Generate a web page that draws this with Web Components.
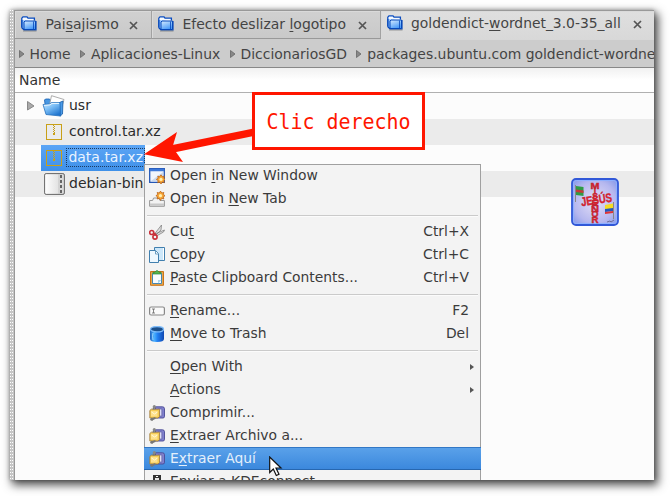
<!DOCTYPE html>
<html lang="es"><head><meta charset="utf-8"><title>File manager</title>
<style>html,body{margin:0;width:670px;height:496px;overflow:hidden;background:#fff;font-family:"DejaVu Sans",sans-serif}</style></head>
<body><fm-window></fm-window>
<script>
const define = (name, html, init) => customElements.define(name, class extends HTMLElement {
  connectedCallback() {
    if (this.shadowRoot) return;
    const t = document.createElement('template');
    t.innerHTML = html;
    this.attachShadow({mode: 'open'}).append(t.content.cloneNode(true));
    if (init) init(this, this.shadowRoot);
  }
});

const box = '<svg width="16" height="16" viewBox="0 0 16 16">';
const snap = '<svg width="16" height="16" viewBox="0 0 16 16" shape-rendering="crispEdges">';
const star = (x, y) => `<g transform="translate(${x} ${y})"><path d="M0-4.6L1.3-2.7 3.3-3.3 2.8-1.2 4.6 0 2.8 1.2 3.3 3.3 1.3 2.7 0 4.6-1.3 2.7-3.3 3.3-2.8 1.2-4.6 0-2.8-1.2-3.3-3.3-1.3-2.7z" fill="#f8a535" stroke="#b65a0c" stroke-width=".7"/><circle r="1.6" fill="#fff0b0"/></g>`;
const icons = {
  tabfolder: `${box}<defs><linearGradient id="g" x2=".5" y2="1"><stop stop-color="#d7ecff"/><stop offset="1" stop-color="#4a9bf8"/></linearGradient></defs><path d="M.8 11.500V2.200L2 .8h4l1 1.400h6.400v2.200" fill="#f5faff" stroke="#0a4cc0" stroke-width="1.300"/><path d="M1 4v8l2 1.800h12V5.500H13" fill="#8cc0ff" stroke="#0748b8" stroke-width="1.200"/><path d="M4 5h10.500v8.500H3V6z" fill="url(#g)" stroke="#0748b8"/><path d="M12.500 5.500v7.500" stroke="#0748b8" opacity=".8"/><path d="M2 15h13.500" stroke="#555" opacity=".5"/></svg>`,
  folder: `<svg width="24" height="22" viewBox="0 0 24 22"><defs><linearGradient id="f" x2=".7" y2="1"><stop stop-color="#cfeaff"/><stop offset=".45" stop-color="#7dbff6"/><stop offset="1" stop-color="#1f75cf"/></linearGradient></defs><path d="M2.500 5l1-1h4l2 2h5v11H4z" fill="#4897e2" stroke="#1460b2" stroke-width=".8"/><path d="M9.500.7l12.500 3.800-3.500 12-12-2z" fill="#fff" stroke="#999" stroke-width=".8"/><path d="M17.500 7.500l3.500-1.500-.5 13-2.500 2.200z" fill="#4b9be8" stroke="#155ba5" stroke-width=".8"/><path d="M1 9.500l6.500-.5 2-1.500h8.500l.5 13.500-14.500-1.500z" fill="url(#f)" stroke="#2570bd" stroke-width=".8"/><path d="M2 10.400l6-.5 2-1.500h7" fill="none" stroke="#eaf7ff"/></svg>`,
  zip: `${snap}<path d="M.5.5h15v15H.5z" fill="none" stroke="#c8a018"/><path d="M7 1h1v1H7zM8 2h1v1H8zM7 3h1v1H7zM8 4h1v1H8zM7 5h1v1H7zM8 6h1v1H8zM7 7h1v1H7zM8 8h1v1H8zM7 9h2v2H7z" fill="#c8a018"/></svg>`,
  doc: `<svg width="21" height="22" viewBox="0 0 21 22"><defs><linearGradient id="d"><stop stop-color="#fff"/><stop offset="1" stop-color="#d6d6d6"/></linearGradient></defs><rect x=".6" y=".6" width="19.800" height="20.800" rx="1.500" fill="url(#d)" stroke="#666"/><path d="M15 1v20" stroke="#c4c4c4"/><path d="M17 2v18" stroke="#333" stroke-width="1.400" stroke-dasharray="3 2"/></svg>`,
  win: `${box}<path d="M.7.7h14.600v13.600H.7z" fill="#f1f5fc" stroke="#2457b5" stroke-width="1.300"/><path d="M1 2h14" stroke="#3b77d9" stroke-width="2.500"/><path d="M2 13L14 4v9z" fill="#cbd8ec"/>${star(12,11.400)}</svg>`,
  tab: `${box}<path d="M.6 15.300V9.500h3l1-2.500h5.400l1 2.500h4.400v5.800z" fill="#f2f2f2" stroke="#999"/><path d="M1 12.500h14v2.300H1z" fill="#c8c8c8"/>${star(11.500,4.700)}</svg>`,
  cut: `${box}<path d="M5.500 10L12.500 1l-.5 5-5 5zM6 10l9.500-4-1 2L7.500 12z" fill="#ddd" stroke="#777" stroke-width=".7"/><circle cx="2.700" cy="8.500" r="2" fill="none" stroke="#c93039" stroke-width="1.600"/><circle cx="6" cy="13" r="2.100" fill="none" stroke="#c93039" stroke-width="1.600"/><path d="M4.600 9.500l2 1" stroke="#c93039" stroke-width="2"/></svg>`,
  copy: `${box}<path d="M5.500.5h10v13h-10z" fill="#cce7fa" stroke="#417fae"/><path d="M14.500 1v12" stroke="#fff"/><path d="M.5 3.500h6l3 3v9h-9z" fill="#eef8ff" stroke="#417fae"/><path d="M6.500 4v3h3" fill="#fff" stroke="#6b9fc3"/></svg>`,
  paste: `${box}<path d="M1.500 1.500h13v13.800h-13z" fill="#e7a54a" stroke="#c9751b"/><path d="M3.500 3.500h9v10h-9z" fill="#f9fdff" stroke="#4587b4"/><path d="M9 13.500v-3.500h3.500z" fill="#a8d5ed"/><path d="M4 4V2.200h2Q8-1 10 2.200h2V4z" fill="#58b54d" stroke="#25843b" stroke-width=".7"/></svg>`,
  rename: `${box}<rect x=".6" y="4" width="14.800" height="8" rx="1.500" fill="#fafafa" stroke="#888" stroke-width="1.200"/><path d="M3 6h3M4.500 6v4M3 10h3" stroke="#666" stroke-width=".8"/></svg>`,
  trash: `${box}<defs><linearGradient id="t"><stop stop-color="#2263bd"/><stop offset=".3" stop-color="#4ab1ff"/><stop offset=".55" stop-color="#217ef1"/><stop offset="1" stop-color="#1048b0"/></linearGradient></defs><path d="M1 3v10q0 3 7 3t7-3V3" fill="url(#t)"/><ellipse cx="8" cy="3.200" rx="6.500" ry="2.700" fill="#1b4f8a" stroke="#7ebcfa" stroke-width="1.300"/><path d="M4 7q-.8 3 0 7" stroke="#9ed8ff" fill="none"/></svg>`,
  ark: `${box}<path d="M6.500 1.800h7q2 0 2 2v7.500q0 1.700-1.500 1.700h-7.500z" fill="#8080cc" stroke="#494994" stroke-width=".9"/><path d="M9 4h3.800v7H9z" fill="#dedef6" stroke="#55559a" stroke-width=".6"/><path d="M.8 5.500l1.500-1.300h8.200v7.300l-1.500 1.500H.8z" fill="#f6cd55" stroke="#9f7a3c" stroke-width=".8"/><path d="M2 6h6.500v5.500H2z" fill="#ffe18c"/><path d="M2.500 7l3 2 3-2" stroke="#fffad8" fill="none"/><path d="M4.500 4.500L5.300 1.500M2.500 14.500l4-1.700" stroke="#777" stroke-width="2"/><circle cx="5.300" cy="1.700" r="1.600" fill="#888"/><circle cx="2.800" cy="14.300" r="1.500" fill="#777"/></svg>`,
  phone: `${snap}<path d="M4 1h8v15H4z" fill="#333"/><path d="M6 4h4v9H6z" fill="#e6e6e6"/><path d="M7 2.500h2" stroke="#fff"/></svg>`
};

define('fm-icon', '<style>:host{display:flex;flex:none}svg{display:block}</style>',
  (el, r) => r.append(document.createRange().createContextualFragment(icons[el.getAttribute('name')] || '')));

define('fm-tab', `<style>:host{box-sizing:border-box;flex:none;display:flex;align-items:center;height:29px;padding:0 0 1px 6px;background:linear-gradient(#d1d1d1,#c9c9c9);border-top:1px solid #999;border-right:1px solid #a2a2a2;border-bottom:1px solid #999;color:#444;font-size:13.96px;white-space:nowrap;box-shadow:inset 1px 1px #dadada}
:host([active]){height:30px;background:linear-gradient(#dfdfdf,#d8d8d8);border-bottom:0;border-right:0;padding-bottom:5px;font-size:13.88px}
span{margin-left:8.5px}:host([active]) span{margin-left:8px}svg{margin-left:auto;flex:none;margin-right:13px;margin-top:2px}:host([active]) svg{margin-right:12px}</style>
<fm-icon name="tabfolder"></fm-icon><span><slot></slot></span><svg width="9" height="9"><path d="M1 1l7 7M8 1L1 8" stroke="#555" stroke-width="1.700"/></svg>`);

define('fm-crumb', `<style>:host{display:flex;align-items:center;flex:none;font-size:13.92px;color:#444;white-space:pre}svg{margin-right:5px}</style>
<svg width="6" height="8"><path d="M.5.500L5 4 .5 7.500z" fill="#888" stroke="#666" stroke-width=".8"/></svg><slot></slot>`);

define('fm-row', `<style>:host{box-sizing:border-box;display:flex;height:26px;padding-left:10px;color:#2b2b2b;font-size:14px}:host(:nth-of-type(even)){background:#ebebeb}
.t{width:16px;display:flex;align-items:center}.c{display:flex;align-items:center;height:26px}.i{width:24px;display:flex;justify-content:center;padding:0 1px}
.n{line-height:17px;padding:0 1px;margin-left:1px;margin-top:-1px}
:host([selected]) .c{background:linear-gradient(#5ba5f5,#3f90e8);width:104px}:host([selected]) .n{outline:1px dotted #1b3b62;color:#e9f3ff;margin-right:1px}</style>
<div class="t"></div><div class="c"><div class="i"></div><span class="n"><slot></slot></span></div>`, (el, r) => {
  const i = document.createElement('fm-icon'); i.setAttribute('name', el.getAttribute('icon'));
  r.querySelector('.i').append(i);
  if (el.hasAttribute('expandable')) r.querySelector('.t').innerHTML = '<svg width="10" height="10" style="margin-left:2px"><path d="M.5.500L7 5 .5 9z" fill="#aaa" stroke="#888"/></svg>';
});

define('fm-item', `<style>:host{box-sizing:border-box;display:flex;align-items:center;height:23px;flex:none;padding:0 11px 0 4px;font-size:13.87px;color:#3b3b3b;white-space:nowrap}
.i{width:21px;flex:none}.k{margin-left:auto}span{margin-top:-1px}
:host([active]){background:linear-gradient(#5ba2ea,#3a87dc);color:#e4effb;box-shadow:inset 0 1px #3277c5,inset 0 -1px #2767b0;margin:0 -1px;padding-left:5px}
:host([sub]){padding-right:6px}</style><div class="i"></div><span><slot></slot></span><span class="k"></span>`, (el, r) => {
  if (el.hasAttribute('icon')) { const i = document.createElement('fm-icon'); i.setAttribute('name', el.getAttribute('icon')); r.querySelector('.i').append(i); }
  const k = r.querySelector('.k');
  if (el.hasAttribute('sub')) k.innerHTML = '<svg width="4" height="6" style="display:block;margin-top:1px"><path d="M0 0l4 3-4 3z" fill="#555"/></svg>';
  else k.textContent = el.getAttribute('key') || '';
});
define('fm-sep', '<style>:host{display:block;flex:none;height:10px;padding:5px 2px 0;box-sizing:border-box}div{height:1px;background:#cacaca;border-bottom:1px solid #fbfbfb}</style><div></div>');

define('fm-menu', `<style>:host{box-sizing:border-box;display:flex;flex-direction:column;width:337px;height:316px;overflow:hidden;padding:0 1px;background:#f3f3f3;box-shadow:inset 1px 1px #a0a0a0,inset -1px 0 #a0a0a0}</style><slot></slot>`);

define('fm-callout', `<style>:host{box-sizing:border-box;display:flex;align-items:center;justify-content:center;width:173px;height:58px;background:#fff;border:3px solid #ff1600;color:#ff1600;font:22px "DejaVu Sans Mono",monospace}
span{display:block;white-space:nowrap;transform:scaleX(.907);margin:0 -20px}</style><span><slot></slot></span>`);

define('fm-logo', `<style>:host{display:block}svg{display:block}</style><svg width="48" height="48" font-family="Liberation Sans,sans-serif" font-weight="700"><defs><radialGradient id="l" r=".75"><stop stop-color="#e4e0f6"/><stop offset=".6" stop-color="#b6b8ef"/><stop offset="1" stop-color="#718be6"/></radialGradient></defs>
<rect x="1" y="1" width="46" height="46" rx="4" fill="url(#l)" stroke="#3158d8" stroke-width="1.800"/><rect x="2.500" y="2.500" width="43" height="43" rx="3" fill="none" stroke="#8eb0ff"/>
<path d="M4.500 7v17M42.500 24v17" stroke="#888"/><path d="M5 8l7.500 1v9l-7.500-1z" fill="#2f9b45"/><path d="M5 11.500l7.500 1v2.500l-7.500-1z" fill="#c83838"/><path d="M34 27l8-1.500v5l-8 1z" fill="#f4dc22"/><path d="M34 31l8-1v3l-8 1z" fill="#2457ba"/><path d="M34 34l8-1v2l-8 1z" fill="#df3434"/>
<g fill="#e1232e" stroke="#b32231" stroke-width=".4" font-size="8.500" text-anchor="middle"><text x="24" y="10.500" textLength="9" lengthAdjust="spacingAndGlyphs">M</text><text x="24" y="16">I</text><text x="24" y="21">S</text><text x="24" y="28" textLength="7" lengthAdjust="spacingAndGlyphs">E</text><text x="24" y="33.500" textLength="8" lengthAdjust="spacingAndGlyphs">Ñ</text><text x="24" y="39" textLength="7" lengthAdjust="spacingAndGlyphs">O</text><text x="24" y="44.500" textLength="7" lengthAdjust="spacingAndGlyphs">R</text><text x="25.500" y="26" font-size="12.500" textLength="31" lengthAdjust="spacingAndGlyphs" transform="rotate(-9 25 22)">JESÚS</text></g><path d="M36 44l3-1 1 1 3-2" stroke="#557" fill="none" stroke-width=".7"/></svg>`);

define('fm-window', `<style>:host{display:block;position:relative;width:670px;height:496px}
u{text-decoration:underline 1px;text-underline-offset:2px;text-decoration-skip-ink:none}
.w{margin-left:10px;position:relative;top:10px;width:644px;height:470px;box-sizing:border-box;background:#fcfcfc;display:flex;overflow:hidden}
.shade{position:absolute;left:10px;top:10px;width:644px;height:470px;box-shadow:3px 4px 9px 1px rgba(0,0,0,.7),0 0 4px rgba(0,0,0,.3)}
.grip{width:4px;flex:none;background:linear-gradient(transparent 1px,#c6c6c6 1px) 0 0/2px 3px,linear-gradient(90deg,#fff 1px,#c6c6c6 1px) 0 0/2px 3px}
.m{width:640px;flex:none;box-sizing:border-box;border-left:1px solid #999}
.tabs{display:flex;height:30px;background:#ccc}.path{display:flex;align-items:center;gap:9.3px;height:27px;padding-left:3.5px;background:#ccc;overflow:hidden}
.h{height:26px;box-sizing:border-box;border-top:1px solid #888;border-bottom:1px solid #b0b0b0;background:linear-gradient(#f1f1f1,#fff 12px);font-size:14px;color:#333;padding:4px 0 0 4px}
.over{position:absolute}</style>
<div class="shade"></div><div class="w"><div class="grip"></div><div class="m"><div class="tabs"><fm-tab style="width:137px">Pai<u>s</u>ajismo</fm-tab><fm-tab style="width:229px">Efecto deslizar <u>l</u>ogotipo</fm-tab><fm-tab active style="width:273px">goldendict-<u>w</u>ordnet_3.0-35_all</fm-tab></div>
<div class="path"><fm-crumb>Home</fm-crumb><fm-crumb>Aplicaciones-Linux</fm-crumb><fm-crumb>DiccionariosGD</fm-crumb><fm-crumb>packages.ubuntu.com goldendict-wordnet</fm-crumb></div>
<div class="h">Name</div>
<fm-row icon="folder" expandable>usr</fm-row><fm-row icon="zip">control.tar.xz</fm-row><fm-row icon="zip" selected>data.tar.xz</fm-row><fm-row icon="doc">debian-binary</fm-row></div></div>
<fm-logo class="over" style="left:571px;top:178px"></fm-logo>
<fm-menu class="over" style="left:144px;top:164px"><fm-item icon="win">Open <u>i</u>n New Window</fm-item><fm-item icon="tab">Open in <u>N</u>ew Tab</fm-item><fm-sep></fm-sep><fm-item icon="cut" key="Ctrl+X">Cu<u>t</u></fm-item><fm-item icon="copy" key="Ctrl+C"><u>C</u>opy</fm-item><fm-item icon="paste" key="Ctrl+V"><u>P</u>aste Clipboard Contents...</fm-item><fm-sep></fm-sep><fm-item icon="rename" key="F2"><u>R</u>ename...</fm-item><fm-item icon="trash" key="Del"><u>M</u>ove to Trash</fm-item><fm-sep></fm-sep><fm-item sub><u>O</u>pen With</fm-item><fm-item sub><u>A</u>ctions</fm-item><fm-item icon="ark">Comprimir...</fm-item><fm-item icon="ark"><u>E</u>xtraer Archivo a...</fm-item><fm-item icon="ark" active>E<u>x</u>traer Aquí</fm-item><fm-item icon="phone">Enviar a KDEconnect</fm-item></fm-menu>
<svg class="over" style="left:140px;top:120px" width="120" height="50"><path d="M117 11.500L32 29" stroke="#ff1600" stroke-width="7.500"/><path d="M4 34.300L37 12l-4.500 15L43 42z" fill="#ff1600"/></svg>
<fm-callout class="over" style="left:252px;top:92px">Clic derecho</fm-callout>
<svg class="over" style="left:269px;top:456px" width="14" height="21"><path d="M.7 1v15.500l3.600-3.400 3 6.400 2.700-1.300-3-6.200h5z" fill="#fff" stroke="#111" stroke-width="1.200"/></svg>`);
</script></body></html>
